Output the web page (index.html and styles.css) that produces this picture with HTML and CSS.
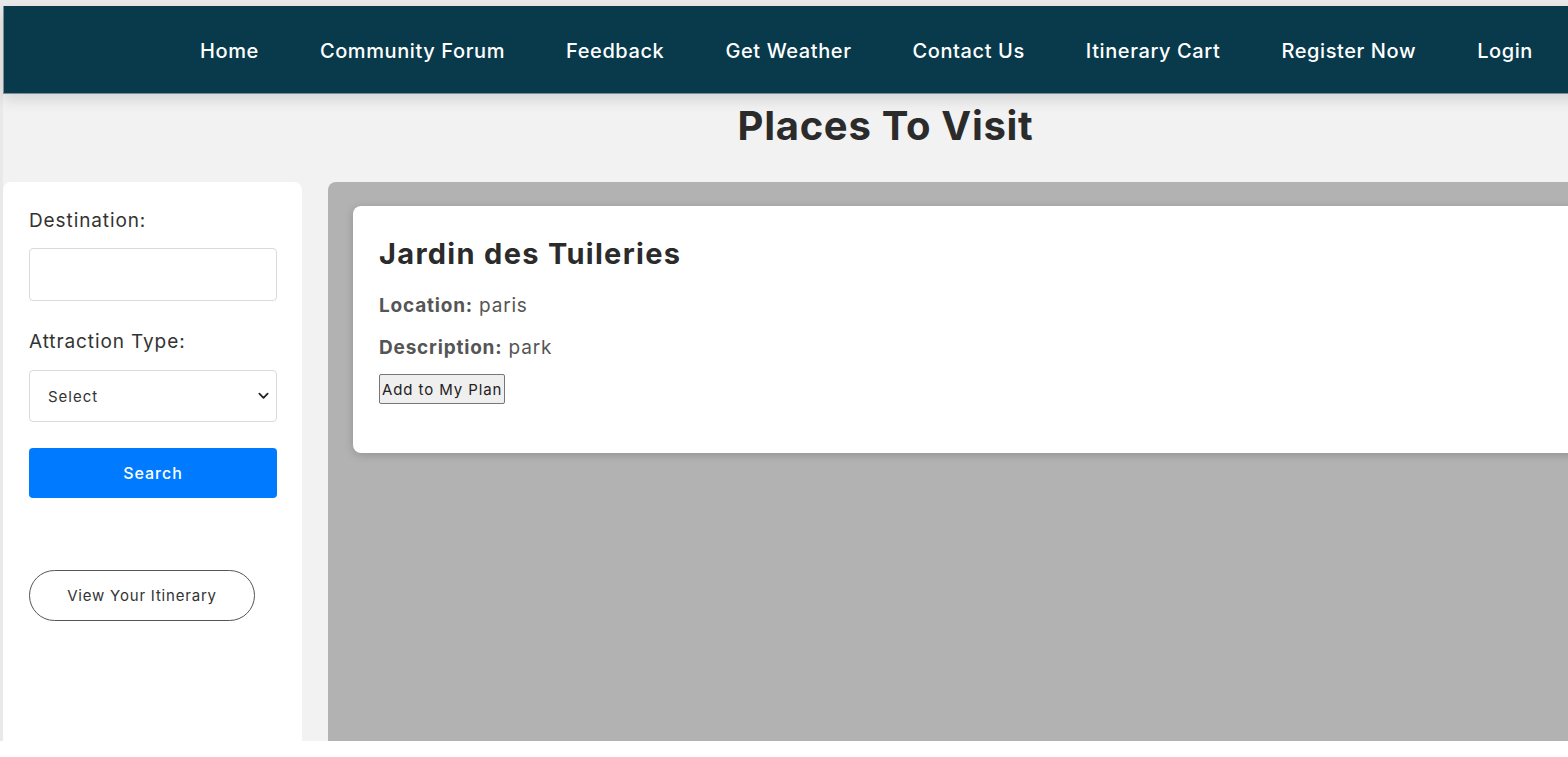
FILE: index.html
```html
<!DOCTYPE html>
<html lang="en">
<head>
<meta charset="utf-8">
<title>Places To Visit</title>
<link rel="stylesheet" href="styles.css">
</head>
<body>
<div class="screen">
  <div class="page">
    <nav class="nav">
      <a href="#">Home</a>
      <a href="#">Community Forum</a>
      <a href="#">Feedback</a>
      <a href="#">Get Weather</a>
      <a href="#">Contact Us</a>
      <a href="#">Itinerary Cart</a>
      <a href="#">Register Now</a>
      <a href="#">Login</a>
    </nav>
    <h1 class="title">Places To Visit</h1>
    <div class="layout">
      <aside class="sidebar">
        <label class="field-label" for="dest">Destination:</label>
        <input class="field" id="dest" type="text">
        <label class="field-label" for="type">Attraction Type:</label>
        <div class="select">
          <span>Select</span>
          <svg class="chev" viewBox="0 0 12 8" width="11" height="8"><path d="M1.5 1.5 L6 6 L10.5 1.5" fill="none" stroke="#222" stroke-width="2" stroke-linecap="round" stroke-linejoin="round"/></svg>
        </div>
        <button class="search">Search</button>
        <button class="itinerary">View Your Itinerary</button>
      </aside>
      <main class="results">
        <div class="card">
          <h2 class="card-title">Jardin des Tuileries</h2>
          <p class="info"><b>Location:</b> paris</p>
          <p class="info"><b>Description:</b> park</p>
          <button class="add">Add to My Plan</button>
        </div>
      </main>
    </div>
  </div>
</div>
</body>
</html>
```

FILE: styles.css
```css
html, body {
  margin: 0;
  padding: 0;
  overflow: hidden;
  background: #ffffff;
}

body {
  font-family: "Inter", "Open Sans", sans-serif;
}

.screen {
  height: 741px;
  background: #e9e9e9;
  padding: 6px 0 0 3px;
  box-sizing: border-box;
  overflow: hidden;
}

.page {
  width: 1765px;
  height: 735px;
  background: #f2f2f2;
}

.nav {
  height: 88px;
  box-sizing: border-box;
  background: #083a4b;
  border-left: 1px solid #7d8e94;
  border-bottom: 1px solid #7d8e94;
  box-shadow: 0 6px 14px rgba(0, 0, 0, 0.12);
  display: flex;
  align-items: center;
  justify-content: flex-end;
  gap: 61px;
  padding: 2px 235px 0 0;
}

.nav a {
  color: #ffffff;
  text-decoration: none;
  font-size: 20px;
  font-weight: 500;
  letter-spacing: 0.6px;
}

.title {
  margin: 0;
  height: 88px;
  line-height: 64px;
  text-align: center;
  font-size: 40px;
  font-weight: 700;
  letter-spacing: 0.7px;
  color: #2b2b2b;
}

.layout {
  display: flex;
  gap: 26px;
  height: 559px;
}

.sidebar {
  width: 299px;
  flex: none;
  background: #ffffff;
  border-radius: 8px 8px 0 0;
  padding: 27px 25px 0 26px;
  box-sizing: border-box;
  display: flex;
  flex-direction: column;
  align-items: flex-start;
}

.field-label {
  font-size: 19px;
  letter-spacing: 0.9px;
  color: #333333;
  line-height: 24px;
}

.field {
  width: 248px;
  height: 53px;
  box-sizing: border-box;
  border: 1px solid #dadada;
  border-radius: 4px;
  margin: 15px 0 29px;
  font: inherit;
}

.select {
  width: 248px;
  height: 52px;
  box-sizing: border-box;
  border: 1px solid #dadada;
  border-radius: 4px;
  margin-top: 16px;
  display: flex;
  align-items: center;
  justify-content: space-between;
  padding: 0 7px 0 18px;
  font-size: 15px;
  letter-spacing: 1px;
  color: #333333;
}

.search {
  margin-top: 26px;
  width: 248px;
  height: 50px;
  border: none;
  border-radius: 4px;
  background: #007bff;
  color: #ffffff;
  font: inherit;
  font-size: 16px;
  font-weight: 500;
  letter-spacing: 1px;
}

.itinerary {
  margin-top: 72px;
  width: 226px;
  height: 51px;
  background: #ffffff;
  border: 1px solid #555555;
  border-radius: 26px;
  color: #333333;
  font: inherit;
  font-size: 15px;
  letter-spacing: 0.8px;
}

.results {
  flex: 1;
  background: #b2b2b3;
  border-radius: 8px 8px 0 0;
  padding: 24px 0 0 25px;
}

.card {
  height: 247px;
  box-sizing: border-box;
  background: #ffffff;
  border-radius: 8px;
  box-shadow: 0 2px 8px rgba(0, 0, 0, 0.18);
  padding: 30px 26px;
}

.card-title {
  margin: 0 0 21px;
  font-size: 29px;
  font-weight: 700;
  letter-spacing: 1.3px;
  color: #2b2b2b;
  line-height: 36px;
}

.info {
  margin: 0 0 16px;
  font-size: 19px;
  letter-spacing: 0.8px;
  line-height: 26px;
  color: #555555;
}

.info b {
  font-weight: 700;
}

.add {
  font: inherit;
  font-size: 15px;
  letter-spacing: 0.9px;
  color: #222222;
  background: #efefef;
  border: 1px solid #767676;
  border-radius: 2px;
  padding: 3px 2px;
  height: 30px;
  margin-top: -3px;
}
```
